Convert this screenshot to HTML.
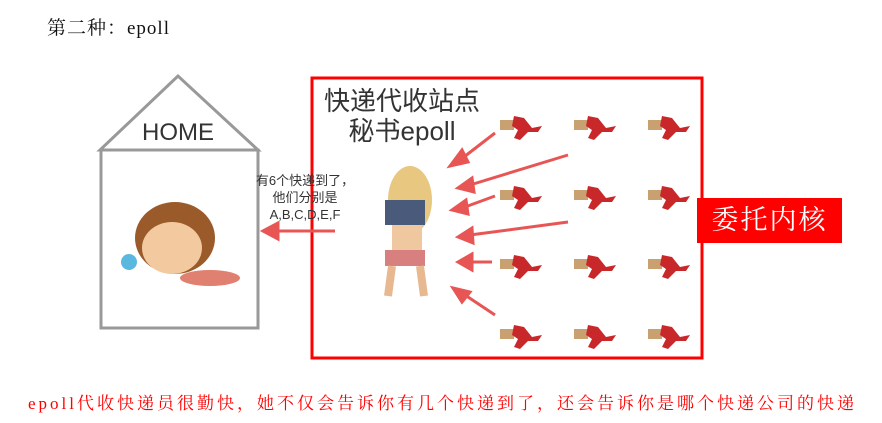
<!DOCTYPE html>
<html><head><meta charset="utf-8"><style>
body{margin:0;width:882px;height:423px;background:#fff;position:relative;overflow:hidden;font-family:"Liberation Serif","Noto Serif CJK SC",serif}
.a{position:absolute}
</style></head><body>
<div class="a" style="left:47px;top:13px;font-size:19px;color:#111;letter-spacing:1px">第二种：epoll</div>
<svg class="a" style="left:0;top:0" width="882" height="423">
<defs>
<g id="c"><rect x="0" y="0" width="14" height="10" fill="#c9a070"/><path d="M14,-4 l10,2 l8,10 l10,-2 l-4,6 l-10,0 l-8,8 l-6,-2 l4,-8 l-6,-4z" fill="#c8282a"/></g>
</defs>
<polygon points="178,76 100,150 258,150" fill="none" stroke="#999" stroke-width="3"/>
<rect x="101" y="150" width="157" height="178" fill="none" stroke="#999" stroke-width="3"/>
<text x="178" y="140" font-family="Liberation Sans" font-size="24" fill="#333" text-anchor="middle">HOME</text>
<ellipse cx="175" cy="238" rx="40" ry="36" fill="#9a5a2a"/>
<ellipse cx="172" cy="248" rx="30" ry="26" fill="#f3c9a0"/>
<ellipse cx="210" cy="278" rx="30" ry="8" fill="#e08070"/>
<circle cx="129" cy="262" r="8" fill="#5ab8e0"/>
<rect x="312" y="78" width="390" height="280" fill="none" stroke="#f00" stroke-width="3"/>
<g stroke="#e85555" stroke-width="3" fill="#e85555">
<line x1="495" y1="133" x2="460" y2="160"/><polygon points="450,166 462,150 468,162"/>
<line x1="568" y1="155" x2="470" y2="185"/><polygon points="458,188 472,178 474,192"/>
<line x1="495" y1="196" x2="465" y2="207"/><polygon points="452,210 466,200 468,214"/>
<line x1="568" y1="222" x2="470" y2="235"/><polygon points="458,237 472,228 473,243"/>
<line x1="492" y1="262" x2="470" y2="262"/><polygon points="458,262 472,254 472,270"/>
<line x1="495" y1="315" x2="465" y2="295"/><polygon points="453,288 470,292 462,302"/>
<line x1="335" y1="231" x2="275" y2="231"/><polygon points="263,231 278,223 278,239"/>
</g>
<use href="#c" x="500" y="120"/><use href="#c" x="574" y="120"/><use href="#c" x="648" y="120"/>
<use href="#c" x="500" y="190"/><use href="#c" x="574" y="190"/><use href="#c" x="648" y="190"/>
<use href="#c" x="500" y="259"/><use href="#c" x="574" y="259"/><use href="#c" x="648" y="259"/>
<use href="#c" x="500" y="329"/><use href="#c" x="574" y="329"/><use href="#c" x="648" y="329"/>
<ellipse cx="410" cy="200" rx="22" ry="34" fill="#e8c880"/>
<rect x="385" y="200" width="40" height="25" fill="#4a5a7a"/>
<rect x="392" y="225" width="30" height="30" fill="#f0c8a0"/>
<rect x="385" y="250" width="40" height="16" fill="#d88080"/>
<path d="M392,266 l-4,30 M420,266 l4,30" stroke="#e8b890" stroke-width="8"/>
</svg>
<div class="a" style="left:316px;top:86px;font-family:'Liberation Sans','Noto Sans CJK SC',sans-serif;font-size:26px;color:#333;line-height:30px;text-align:center;width:172px">快递代收站点<br>秘书epoll</div>
<div class="a" style="left:250px;top:172px;width:110px;font-family:'Liberation Sans','Noto Sans CJK SC',sans-serif;font-size:13px;color:#333;line-height:17px;text-align:center">有6个快递到了，<br>他们分别是<br>A,B,C,D,E,F</div>
<div class="a" style="left:697px;top:198px;width:145px;height:45px;background:#f00;color:#fff;font-size:27px;line-height:45px;text-align:center;letter-spacing:2px">委托内核</div>
<div class="a" style="left:28px;top:389px;font-size:17px;color:#f00;letter-spacing:3px;white-space:nowrap">epoll代收快递员很勤快，她不仅会告诉你有几个快递到了，还会告诉你是哪个快递公司的快递</div>
</body></html>
